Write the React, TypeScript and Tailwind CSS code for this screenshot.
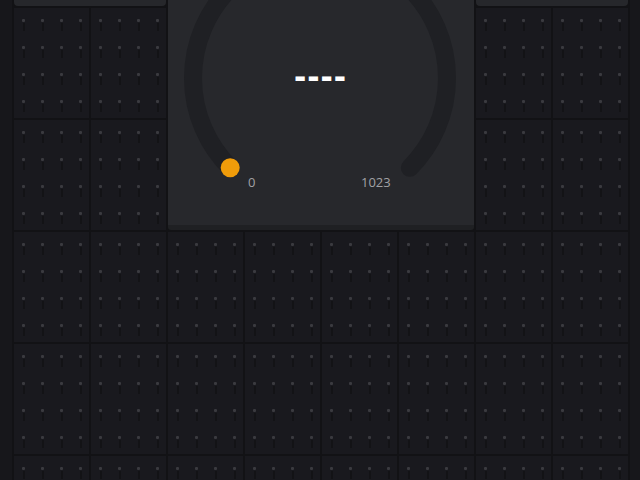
const COLS = 8;
const ROWS = 6;

function PegCell() {
  return (
    <div className="flex flex-col gap-[15px] bg-[#19191e] pl-[8px] pt-[11px]">
      {[0, 1, 2, 3].map((r) => (
        <div key={r} className="flex gap-[16px]">
          {[0, 1, 2, 3].map((c) => (
            <div key={c} className="flex w-[3px] flex-col items-center">
              <div className="h-[3px] w-[3px] rounded-[1px] bg-[#3a3a3f]" />
              <div className="mt-[1px] h-[8px] w-[2px] bg-[#131316]" />
            </div>
          ))}
        </div>
      ))}
    </div>
  );
}

function Gauge() {
  return (
    <div className="relative col-span-4 row-span-3 overflow-hidden rounded-[3px] border-b-[5px] border-[#1f2023] bg-[#27282c]">
      <svg className="absolute left-0 top-0" width="306" height="334" viewBox="0 0 306 334">
        <path
          d="M 62.2 271.8 A 127 127 0 1 1 241.8 271.8"
          fill="none"
          stroke="#1f2024"
          strokeWidth="18"
          strokeLinecap="round"
        />
        <circle cx="62.2" cy="271.8" r="9.5" fill="#f09c0a" />
      </svg>
      <div className="absolute left-0 right-0 top-[157px] text-center text-[35px] font-bold leading-[44px] tracking-[2px] text-white">
        ----
      </div>
      <div className="absolute left-[80px] top-[278px] text-[13px] leading-[16px] text-[#a1a1a5]">0</div>
      <div className="absolute left-[193px] top-[278px] text-[13px] leading-[16px] text-[#a1a1a5]">1023</div>
    </div>
  );
}

export default function App() {
  const cells: React.ReactNode[] = [];
  // row 0: two top cards and the gauge
  cells.push(<div key="tl" className="col-span-2 rounded-b-[4px] bg-[#26272b]" />);
  cells.push(<Gauge key="g" />);
  cells.push(<div key="tr" className="col-span-2 rounded-b-[4px] bg-[#26272b]" />);
  for (let r = 1; r < ROWS; r++) {
    for (let c = 0; c < COLS; c++) {
      if (r < 3 && c >= 2 && c < 6) continue;
      cells.push(<PegCell key={`${r}-${c}`} />);
    }
  }

  return (
    <div
      className="h-[480px] w-[640px] overflow-hidden bg-[#17171b]"
      style={{ fontFamily: '"Open Sans", "Noto Sans", sans-serif' }}
    >
      <div className="ml-[12px] mt-[-106px] grid w-[618px] grid-cols-[repeat(8,75px)] auto-rows-[110px] gap-[2px] bg-[#121215] p-[2px]">
        {cells}
      </div>
    </div>
  );
}
